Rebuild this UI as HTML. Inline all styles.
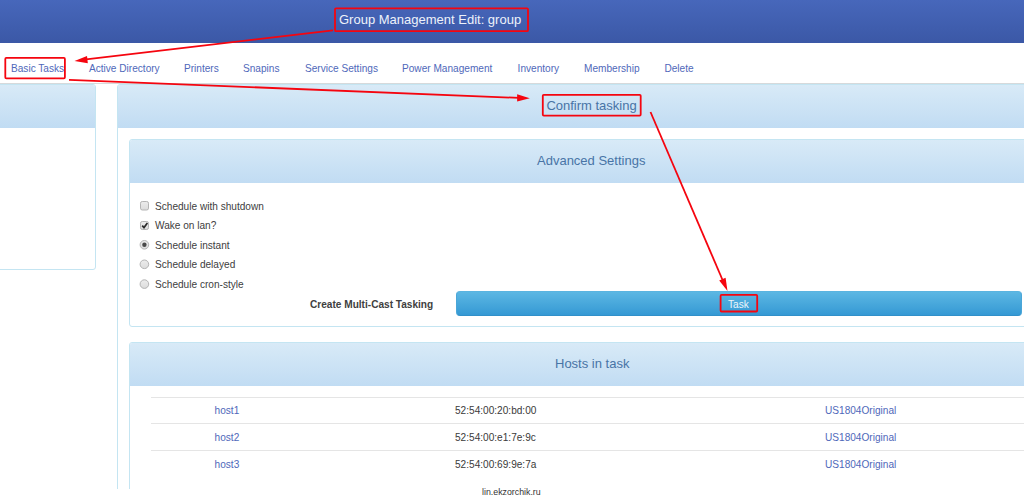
<!DOCTYPE html>
<html><head><meta charset="utf-8">
<style>
*{box-sizing:border-box;margin:0;padding:0}
html,body{width:1024px;height:498px;overflow:hidden;background:#fff;font-family:"Liberation Sans",sans-serif;position:relative}
.abs{position:absolute}
#hdr{left:0;top:0;width:1024px;height:43px;background:linear-gradient(#4767bb,#3b58a6)}
#title{left:339px;top:12px;font-size:13px;color:#eef2fa;white-space:nowrap}
.nav{top:63px;font-size:10.1px;color:#4f68ba;white-space:nowrap}
#navline{left:0;top:83px;width:1024px;height:1px;background:#d6d9db}
.panel{border:1px solid #c4e5f2;border-radius:3px;background:#fff;overflow:hidden}
.ph{background:linear-gradient(#d8eaf7,#c1dcf3)}
.pt{font-size:13px;color:#4874a6;white-space:nowrap}
.opt{font-size:10.1px;color:#404040;white-space:nowrap}
.cb{width:9px;height:9px;border:1px solid #a9a9a9;border-radius:2px;background:linear-gradient(#fff,#e6e6e6)}
.rb{width:10px;height:10px;border:1px solid #a9a9a9;border-radius:50%;background:linear-gradient(#fff,#e6e6e6)}
.tbl{font-size:10.1px;white-space:nowrap;color:#3a3a3a}
.lnk{color:#4f68ba}
.hl{height:1px;background:#e5e5e5}
.red{border:2px solid #e0111b}
</style></head>
<body>
<div id="hdr" class="abs"></div>
<div id="navline" class="abs"></div>
<div id="title" class="abs">Group Management Edit: group</div>

<div class="abs nav" style="left:11px">Basic Tasks</div>
<div class="abs nav" style="left:89px">Active Directory</div>
<div class="abs nav" style="left:184px">Printers</div>
<div class="abs nav" style="left:243px">Snapins</div>
<div class="abs nav" style="left:305px">Service Settings</div>
<div class="abs nav" style="left:402px">Power Management</div>
<div class="abs nav" style="left:517.6px">Inventory</div>
<div class="abs nav" style="left:584px">Membership</div>
<div class="abs nav" style="left:664.4px">Delete</div>

<!-- left panel -->
<div class="abs panel" style="left:-4px;top:84px;width:100px;height:186px">
  <div class="ph" style="height:43px"></div>
</div>

<!-- main card -->
<div class="abs panel" style="left:117px;top:84px;width:920px;height:420px">
  <div class="ph" style="height:43px"></div>
</div>
<div class="abs pt" style="left:546.4px;top:98px">Confirm tasking</div>

<!-- advanced settings -->
<div class="abs panel" style="left:129px;top:139px;width:900px;height:188px">
  <div class="ph" style="height:43px"></div>
</div>
<div class="abs pt" style="left:537px;top:153px">Advanced Settings</div>

<svg class="abs" style="left:136px;top:196px" width="20" height="96">
  <defs><linearGradient id="gg" x1="0" y1="0" x2="0" y2="1"><stop offset="0" stop-color="#ececec"/><stop offset="1" stop-color="#dcdcdc"/></linearGradient></defs>
  <g stroke="#b4b4b4" stroke-width="1" fill="url(#gg)">
    <rect x="4.5" y="5.5" width="8" height="8.5" rx="1.8"/>
    <rect x="4.5" y="25.5" width="8" height="8" rx="1.8"/>
    <circle cx="8.4" cy="48.8" r="4.3"/>
    <circle cx="8.4" cy="68.3" r="4.3"/>
    <circle cx="8.4" cy="88.1" r="4.3"/>
  </g>
  <circle cx="8.4" cy="48.8" r="2.2" fill="#4a4a4a"/>
  <path d="M6.2 29.6 L8 31.6 L11.4 27" stroke="#2a2a2a" stroke-width="1.7" fill="none"/>
</svg>
<div class="abs opt" style="left:155px;top:201px">Schedule with shutdown</div>
<div class="abs opt" style="left:155px;top:220px">Wake on lan?</div>
<div class="abs opt" style="left:155px;top:240px">Schedule instant</div>
<div class="abs opt" style="left:155px;top:259px">Schedule delayed</div>
<div class="abs opt" style="left:155px;top:279px">Schedule cron-style</div>

<div class="abs opt" style="left:310px;top:299px;font-weight:bold">Create Multi-Cast Tasking</div>
<div class="abs" style="left:456px;top:291px;width:566px;height:25px;border-radius:4px;background:linear-gradient(#5cb7e3,#3599d4);border:1px solid #4aa6d8;border-top-color:#5ab4e0;border-bottom-color:#3190c9"></div>
<div class="abs opt" style="left:728px;top:299px;color:#eef6fb">Task</div>

<!-- hosts -->
<div class="abs panel" style="left:129px;top:342px;width:900px;height:200px">
  <div class="ph" style="height:43px"></div>
</div>
<div class="abs pt" style="left:555px;top:356px">Hosts in task</div>
<div class="abs hl" style="left:151px;top:397px;width:873px"></div>
<div class="abs hl" style="left:151px;top:423px;width:873px"></div>
<div class="abs hl" style="left:151px;top:450px;width:873px"></div>
<div class="abs tbl lnk" style="left:214.6px;top:405px">host1</div>
<div class="abs tbl" style="left:455px;top:405px">52:54:00:20:bd:00</div>
<div class="abs tbl lnk" style="left:825px;top:405px">US1804Original</div>
<div class="abs tbl lnk" style="left:214.6px;top:432px">host2</div>
<div class="abs tbl" style="left:455px;top:432px">52:54:00:e1:7e:9c</div>
<div class="abs tbl lnk" style="left:825px;top:432px">US1804Original</div>
<div class="abs tbl lnk" style="left:214.6px;top:459px">host3</div>
<div class="abs tbl" style="left:455px;top:459px">52:54:00:69:9e:7a</div>
<div class="abs tbl lnk" style="left:825px;top:459px">US1804Original</div>

<div class="abs" style="left:0;top:489px;width:1024px;height:9px;background:#fff"></div>
<div class="abs" style="left:482px;top:487px;font-size:8.8px;color:#333;white-space:nowrap">lin.ekzorchik.ru</div>

<!-- red annotations -->
<svg class="abs" style="left:0;top:0" width="1024" height="498">
  <g stroke="#f5050f" stroke-width="1.8" fill="none">
    <rect x="335" y="8.3" width="193" height="22.9" rx="1"/>
    <rect x="5.3" y="57.9" width="59.6" height="20.4" rx="1"/>
    <rect x="542.8" y="94.8" width="97.9" height="20.8" rx="1"/>
    <rect x="720.6" y="294.9" width="36.6" height="16.6" rx="1"/>
    <line x1="333" y1="30.4" x2="86" y2="59.4"/>
    <line x1="69" y1="79.8" x2="519" y2="97.9"/>
    <line x1="650.5" y1="112" x2="723" y2="281"/>
  </g>
  <g fill="#f5050f">
    <polygon points="74.5,61.1 87.8,63.3 87.0,55.9"/>
    <polygon points="529.8,98.3 517.1,94.2 517.1,101.4"/>
    <polygon points="727.5,291.1 725.6,277.8 719.2,280.6"/>
  </g>
</svg>
</body></html>
